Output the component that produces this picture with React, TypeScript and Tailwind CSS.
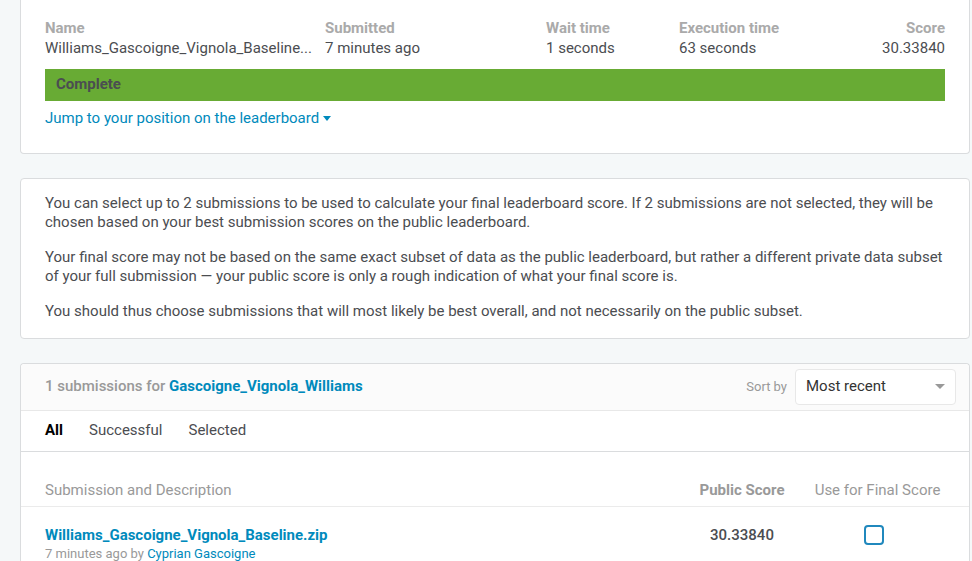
import { useState } from "react";

const link = "text-[#008abc] hover:underline";
const card = "border border-[#dadcde] bg-white";

function Caret({ className }: { className: string }) {
  return (
    <svg viewBox="0 0 10 5" preserveAspectRatio="none" className={className} aria-hidden="true">
      <path d="M0 0h10L5 5z" fill="currentColor" />
    </svg>
  );
}

function LatestSubmission() {
  return (
    <section className={`${card} rounded-b border-t-0 px-6 pt-[18px] pb-[25px]`}>
      <table className="w-full table-fixed text-left leading-5">
        <thead className="text-[#aaaaaa]">
          <tr>
            <th className="w-[280px] font-bold">Name</th>
            <th className="w-[221px] font-bold">Submitted</th>
            <th className="w-[133px] font-bold">Wait time</th>
            <th className="font-bold">Execution time</th>
            <th className="w-[15%] text-right font-bold">Score</th>
          </tr>
        </thead>
        <tbody>
          <tr>
            <td className="whitespace-nowrap">Williams_Gascoigne_Vignola_Baseline...</td>
            <td>7 minutes ago</td>
            <td>1 seconds</td>
            <td>63 seconds</td>
            <td className="text-right">30.33840</td>
          </tr>
        </tbody>
      </table>
      <div className="mt-[11px] h-8 bg-[#68ab34] px-[11px] leading-[30px] font-bold">Complete</div>
      <a href="#leaderboard" className={`${link} mt-[7px] flex w-fit items-center gap-1 leading-5`}>
        Jump to your position on the leaderboard
        <Caret className="h-[5px] w-2" />
      </a>
    </section>
  );
}

function Instructions() {
  return (
    <section className={`${card} space-y-4 rounded px-6 pt-[15px] pb-[17px] leading-[19px]`}>
      <p>
        You can select up to 2 submissions to be used to calculate your final leaderboard score. If 2 submissions are not selected, they will be chosen based on your best submission scores on the public leaderboard.
      </p>
      <p>
        Your final score may not be based on the same exact subset of data as the public leaderboard, but rather a different private data subset of your full submission — your public score is only a rough indication of what your final score is.
      </p>
      <p>You should thus choose submissions that will most likely be best overall, and not necessarily on the public subset.</p>
    </section>
  );
}

function Submissions() {
  const [tab, setTab] = useState("All");
  return (
    <section className={`${card} rounded-t border-b-0`}>
      <header className="flex h-[47px] items-center rounded-t border-b border-[#e8e8e8] bg-[#fbfbfb] pr-[13px] pl-6">
        <h2 className="flex-1 pb-[2px] font-medium text-[#999999]">
          1 submissions for{" "}
          <a href="#team" className={`${link} font-bold`}>Gascoigne_Vignola_Williams</a>
        </h2>
        <label htmlFor="sort" className="mr-2 text-[13px] text-[#999999]">Sort by</label>
        <div className="relative w-[161px]">
          <select id="sort" className="block h-9 w-full appearance-none rounded border border-[#e8e8e8] bg-white px-[10px] pb-[2px] text-[#333333]">
            <option>Most recent</option>
            <option>Public score</option>
          </select>
          <Caret className="pointer-events-none absolute top-[15px] right-[11px] h-[5px] w-[10px] text-[#999999]" />
        </div>
      </header>
      <nav className="flex h-[41px] items-center gap-[26px] border-b border-[#dadcde] px-6 pb-[2px]">
        {["All", "Successful", "Selected"].map((name) => (
          <button key={name} onClick={() => setTab(name)} className={tab === name ? "font-bold text-black" : ""}>
            {name}
          </button>
        ))}
      </nav>
      <table className="w-full table-fixed text-center">
        <thead className="text-[#999999]">
          <tr className="border-b border-[#ebebeb] leading-5">
            <th className="pt-7 pb-[6px] pl-6 text-left font-normal">Submission and Description</th>
            <th className="w-[120px] pt-7 pb-[6px] font-bold">Public Score</th>
            <th className="w-[167px] pt-7 pr-4 pb-[6px] font-normal">Use for Final Score</th>
          </tr>
        </thead>
        <tbody>
          <tr className="align-top leading-5">
            <td className="pt-[18px] pb-6 pl-6 text-left">
              <a href="#download" className={`${link} font-bold`}>Williams_Gascoigne_Vignola_Baseline.zip</a>
              <p className="text-[13px] leading-[18px] text-[#999999]">
                7 minutes ago by <a href="#author" className={link}>Cyprian Gascoigne</a>
              </p>
            </td>
            <td className="pt-[18px] font-medium">30.33840</td>
            <td className="pt-[18px] pr-[23px]">
              <input
                type="checkbox"
                aria-label="Use for final score"
                className="mx-auto block size-5 appearance-none rounded border-2 border-[#2088bd] bg-white checked:bg-[#2088bd]"
              />
            </td>
          </tr>
        </tbody>
      </table>
    </section>
  );
}

export default function App() {
  return (
    <main className="flex h-screen flex-col gap-6 overflow-hidden bg-[#f5f8f9] pr-[2px] pl-5 font-['Roboto',sans-serif] text-[15px] text-[#4b4d51] *:shrink-0">
      <LatestSubmission />
      <Instructions />
      <Submissions />
    </main>
  );
}
